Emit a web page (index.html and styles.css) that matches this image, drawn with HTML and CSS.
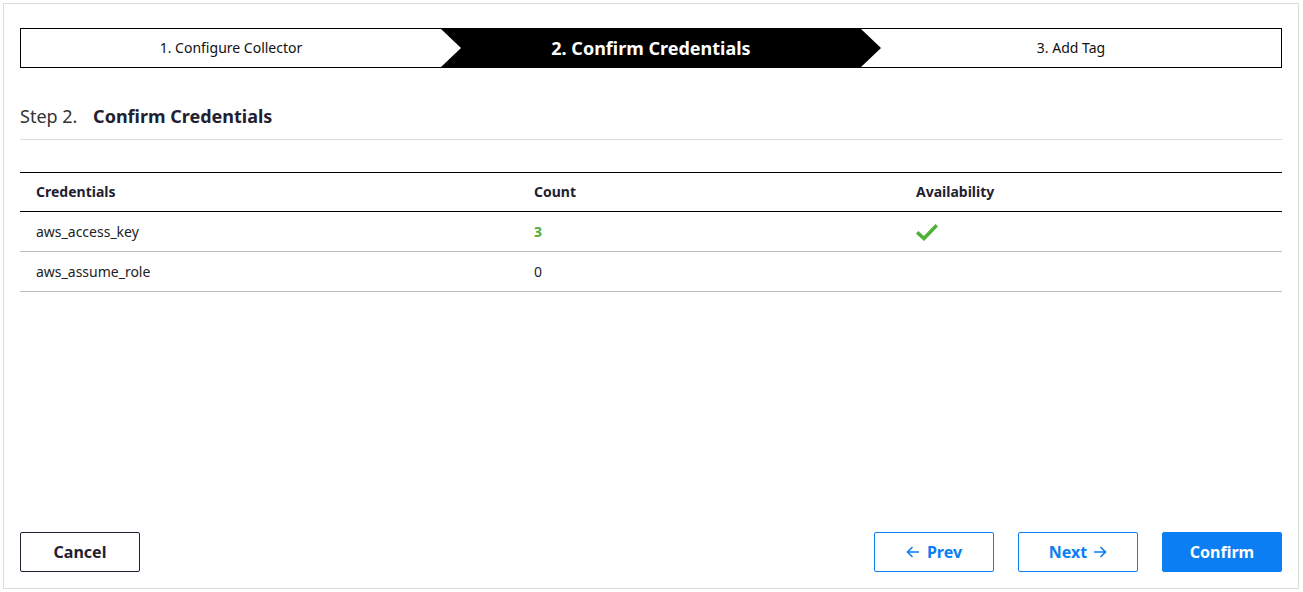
FILE: index.html
```html
<!DOCTYPE html>
<html lang="en">
<head>
<meta charset="utf-8">
<title>Confirm Credentials</title>
<link rel="stylesheet" href="styles.css">
</head>
<body>
<div class="frame">
  <div class="stepper">
    <div class="step">1. Configure Collector</div>
    <div class="step active"><span>2. Confirm Credentials</span></div>
    <div class="step">3. Add Tag</div>
  </div>

  <div class="heading">
    <span class="step-no">Step 2.</span>
    <span class="step-title">Confirm Credentials</span>
  </div>

  <table class="creds">
    <thead>
      <tr>
        <th class="c1">Credentials</th>
        <th class="c2">Count</th>
        <th class="c3">Availability</th>
      </tr>
    </thead>
    <tbody>
      <tr>
        <td>aws_access_key</td>
        <td class="count-ok">3</td>
        <td><svg class="check" width="22" height="18" viewBox="0 0 22 18"><path d="M2.5 10.5 L8 15.5 L19.5 3.5" fill="none" stroke="#52b038" stroke-width="3.6" stroke-linecap="square"/></svg></td>
      </tr>
      <tr>
        <td>aws_assume_role</td>
        <td>0</td>
        <td></td>
      </tr>
    </tbody>
  </table>

  <div class="actions">
    <button class="btn btn-cancel">Cancel</button>
    <div class="nav">
      <button class="btn btn-outline"><svg class="arr" width="14" height="12" viewBox="0 0 14 12"><path d="M13 6 H1.5 M6.5 1 L1.5 6 L6.5 11" fill="none" stroke="currentColor" stroke-width="1.6"/></svg>Prev</button>
      <button class="btn btn-outline">Next<svg class="arr arr-r" width="14" height="12" viewBox="0 0 14 12"><path d="M1 6 H12.5 M7.5 1 L12.5 6 L7.5 11" fill="none" stroke="currentColor" stroke-width="1.6"/></svg></button>
      <button class="btn btn-primary">Confirm</button>
    </div>
  </div>
</div>
</body>
</html>
```

FILE: styles.css
```css
* { box-sizing: border-box; }

html, body {
  margin: 0;
  padding: 0;
  background: #fff;
}

body {
  font-family: "Noto Sans", "Open Sans", sans-serif;
  color: #222;
}

.frame {
  margin: 3px 0 0 3px;
  width: 1296px;
  height: 586px;
  border: 1px solid #dcdcdc;
  padding: 24px 16px 16px 16px;
  display: flex;
  flex-direction: column;
}

.stepper {
  display: flex;
  height: 40px;
  border: 1px solid #000;
  position: relative;
}

.step {
  flex: 1 1 0;
  display: flex;
  align-items: center;
  justify-content: center;
  font-size: 14px;
  line-height: 18px;
  padding-bottom: 1px;
  color: #111;
  position: relative;
}

.step.active {
  color: #fff;
  font-weight: 700;
  font-size: 18px;
  line-height: 24px;
}

.step.active::before {
  content: "";
  position: absolute;
  left: 0;
  top: 0;
  bottom: 0;
  right: -20px;
  background: #000;
  clip-path: polygon(0 0, calc(100% - 20px) 0, 100% 50%, calc(100% - 20px) 100%, 0 100%, 20px 50%);
}

.step.active span {
  position: relative;
}

.heading {
  margin-top: 36px;
  padding-bottom: 11px;
  border-bottom: 1px solid #dcdcdc;
  line-height: 24px;
  font-size: 18px;
}

.step-no {
  color: #333;
  margin-right: 11px;
}

.step-title {
  font-weight: 700;
  color: #1f2130;
}

.creds {
  margin-top: 32px;
  width: 100%;
  border-collapse: collapse;
  font-size: 14px;
  table-layout: fixed;
}

.creds th {
  text-align: left;
  font-weight: 700;
  color: #1f2130;
  height: 39px;
  padding: 0 16px 1px;
  border-top: 1px solid #000;
  border-bottom: 1px solid #000;
}

.creds td {
  height: 40px;
  padding: 0 16px;
  border-bottom: 1px solid #bdbdbd;
  color: #222;
  vertical-align: middle;
}

.c1 { width: 498px; }
.c2 { width: 382px; }

.count-ok {
  color: #4cae33 !important;
  font-weight: 700;
}

.check {
  display: block;
}

.actions {
  margin-top: auto;
  display: flex;
  justify-content: space-between;
  align-items: center;
}

.nav {
  display: flex;
  gap: 24px;
}

.btn {
  width: 120px;
  height: 40px;
  border-radius: 2px;
  font-family: "Noto Sans", "Open Sans", sans-serif;
  font-size: 16px;
  font-weight: 700;
  display: inline-flex;
  align-items: center;
  justify-content: center;
  background: #fff;
  cursor: pointer;
  padding: 0;
}

.btn-cancel {
  border: 1px solid #1f2130;
  color: #1f2130;
}

.btn-outline {
  border: 1px solid #0a7ef2;
  color: #0a7ef2;
}

.btn-primary {
  border: 1px solid #0a7ef2;
  background: #0a7ef2;
  color: #fff;
}

.arr {
  margin-right: 7px;
}

.arr-r {
  margin-right: 0;
  margin-left: 6px;
}
```
